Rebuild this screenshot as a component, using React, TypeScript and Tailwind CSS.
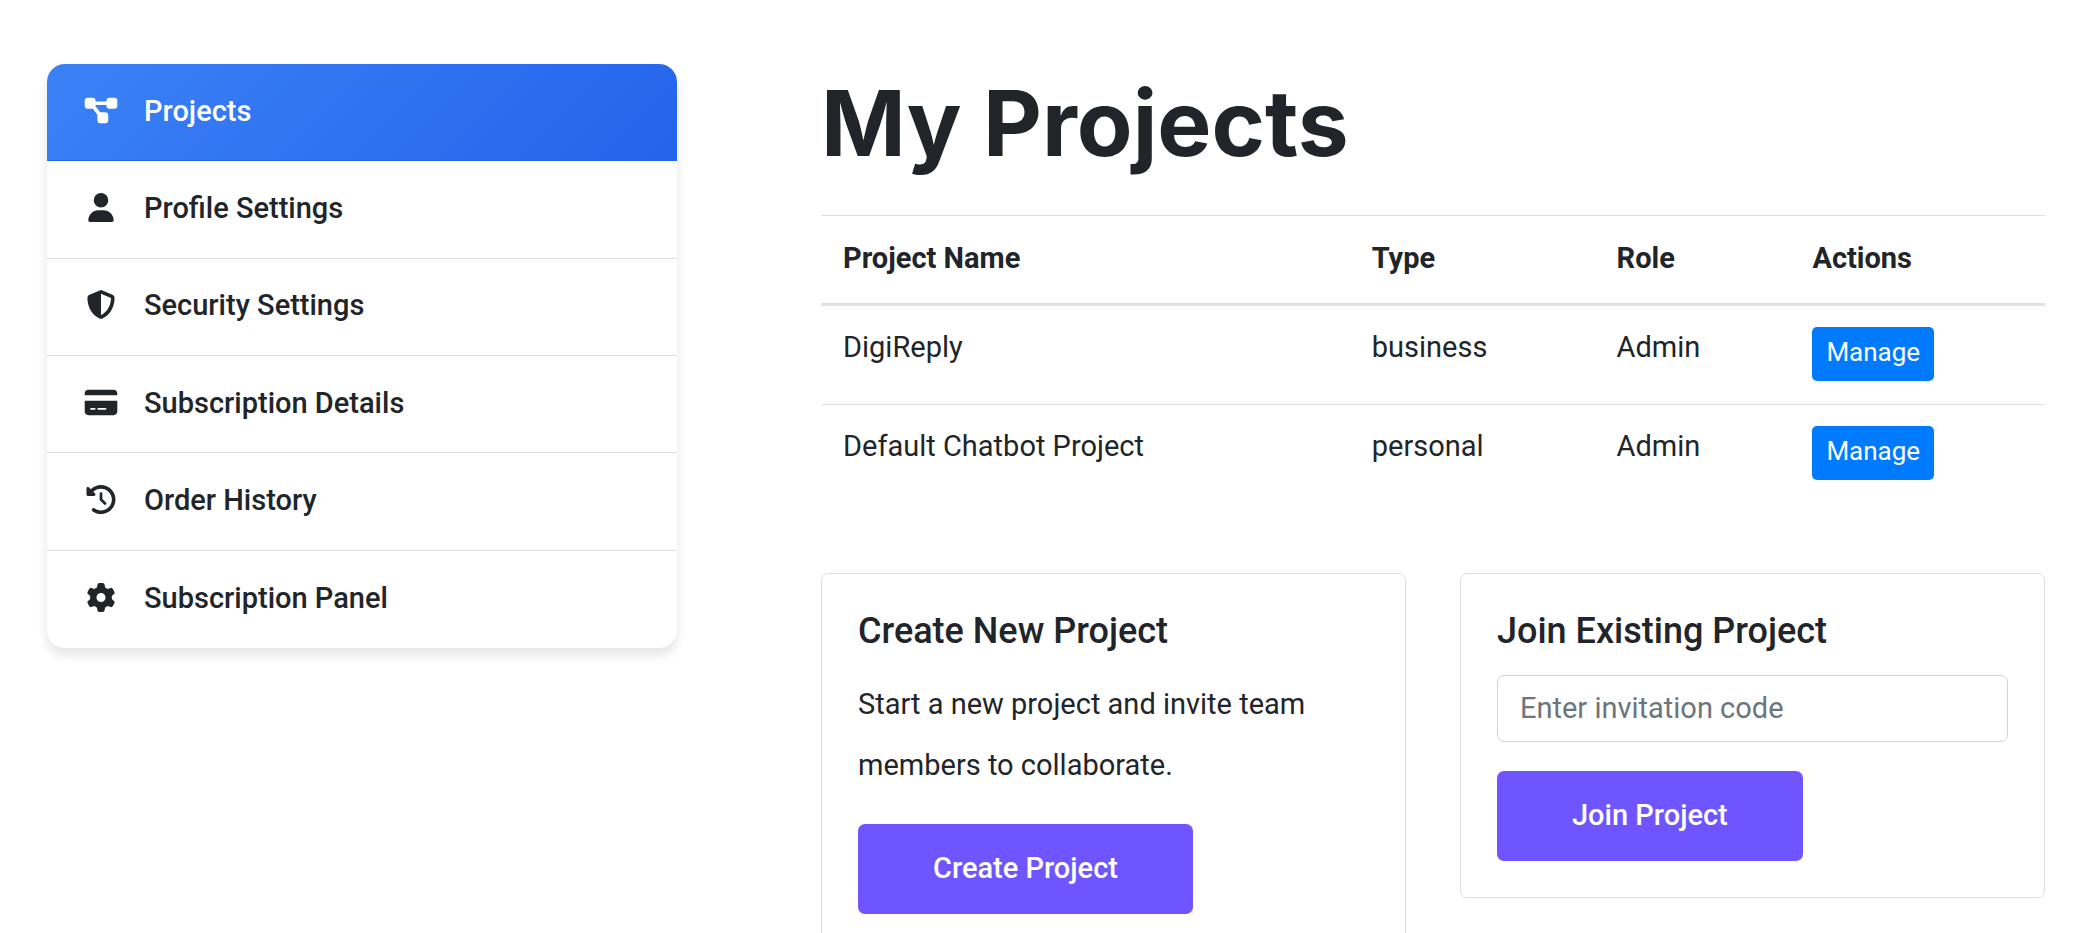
import type { IconType } from "react-icons";
import {
  FaClockRotateLeft,
  FaCreditCard,
  FaDiagramProject,
  FaGear,
  FaShieldHalved,
  FaUser,
} from "react-icons/fa6";

const menu: { label: string; icon: IconType; active?: boolean }[] = [
  { label: "Projects", icon: FaDiagramProject, active: true },
  { label: "Profile Settings", icon: FaUser },
  { label: "Security Settings", icon: FaShieldHalved },
  { label: "Subscription Details", icon: FaCreditCard },
  { label: "Order History", icon: FaClockRotateLeft },
  { label: "Subscription Panel", icon: FaGear },
];

const projects = [
  { name: "DigiReply", type: "business", role: "Admin" },
  { name: "Default Chatbot Project", type: "personal", role: "Admin" },
];

function Sidebar() {
  return (
    <nav
      aria-label="Account"
      className="grid min-h-[584px] auto-rows-fr overflow-hidden rounded-[18px] bg-white shadow-[0_7px_11px_rgba(0,0,0,0.1)]"
    >
      {menu.map(({ label, icon: Icon, active }) => (
        <a
          key={label}
          href="#"
          aria-current={active ? "page" : undefined}
          className={
            active
              ? "flex items-center gap-[25px] border-b border-[#2563eb] bg-linear-135 from-[#3b82f6] to-[#2563eb] px-9 font-medium text-white"
              : "flex items-center gap-[25px] border-b border-[#dfdfdf] px-9 font-medium last:border-b-0"
          }
        >
          <Icon className="mb-1 h-[29px] w-9" aria-hidden="true" />
          <span className="mb-0.5">{label}</span>
        </a>
      ))}
    </nav>
  );
}

function ProjectTable() {
  return (
    <table className="w-full table-fixed text-left">
      <colgroup>
        <col className="w-[43.2%]" />
        <col className="w-[20%]" />
        <col className="w-[16%]" />
        <col />
      </colgroup>
      <thead>
        <tr className="border-t border-b-3 border-t-[#dee2e6] border-b-[#dee2e6]">
          <th className="px-[22px] pt-3 pb-[14px] font-bold">Project Name</th>
          <th className="px-[22px] pt-3 pb-[14px] font-bold">Type</th>
          <th className="px-[22px] pt-3 pb-[14px] font-bold">Role</th>
          <th className="px-[22px] pt-3 pb-[14px] font-bold">Actions</th>
        </tr>
      </thead>
      <tbody>
        {projects.map((p) => (
          <tr key={p.name} className="border-b border-[#dee2e6] align-top last:border-b-0">
            <td className="px-[22px] pt-[11px]">{p.name}</td>
            <td className="px-[22px] pt-[11px]">{p.type}</td>
            <td className="px-[22px] pt-[11px]">{p.role}</td>
            <td className="px-[22px] pt-[21px] pb-[23px]">
              <button
                type="button"
                className="block rounded-[5px] bg-[#007bff] px-[14px] pt-[6px] pb-[9px] text-[26px] leading-[39px] text-white"
              >
                Manage
              </button>
            </td>
          </tr>
        ))}
      </tbody>
    </table>
  );
}

export default function App() {
  return (
    <div className="grid grid-cols-[630fr_1224fr] items-start gap-36 overflow-hidden bg-white pt-16 pr-[39px] pb-16 pl-[47px] font-['Roboto',sans-serif] text-[29px] leading-[61px] text-[#212529]">
      <Sidebar />
      <main>
        <h1 className="mb-[33px] font-['Inter',sans-serif] text-[91px] leading-[118px] font-bold">
          My Projects
        </h1>
        <ProjectTable />
        <div className="mt-[70px] grid grid-cols-2 items-start gap-[54px]">
          <section className="rounded-[7px] border border-[#dfdfdf] p-9">
            <h2 className="mb-[21px] text-[36px] leading-[43px] font-medium">Create New Project</h2>
            <p className="mb-7">Start a new project and invite team members to collaborate.</p>
            <button
              type="button"
              className="block rounded-[7px] bg-[#6f55ff] px-[75px] pt-[14px] pb-[15px] font-medium text-white"
            >
              Create Project
            </button>
          </section>
          <section className="rounded-[7px] border border-[#dfdfdf] p-9">
            <h2 className="mb-[22px] text-[36px] leading-[43px] font-medium">Join Existing Project</h2>
            <input
              type="text"
              aria-label="Invitation code"
              placeholder="Enter invitation code"
              className="mb-[29px] block h-[67px] w-full rounded-[7px] border border-[#ced4da] px-[22px] pb-0.5 placeholder:text-[#6c757d]"
            />
            <button
              type="button"
              className="block rounded-[7px] bg-[#6f55ff] px-[75px] pt-[14px] pb-[15px] font-medium text-white"
            >
              Join Project
            </button>
          </section>
        </div>
      </main>
    </div>
  );
}
